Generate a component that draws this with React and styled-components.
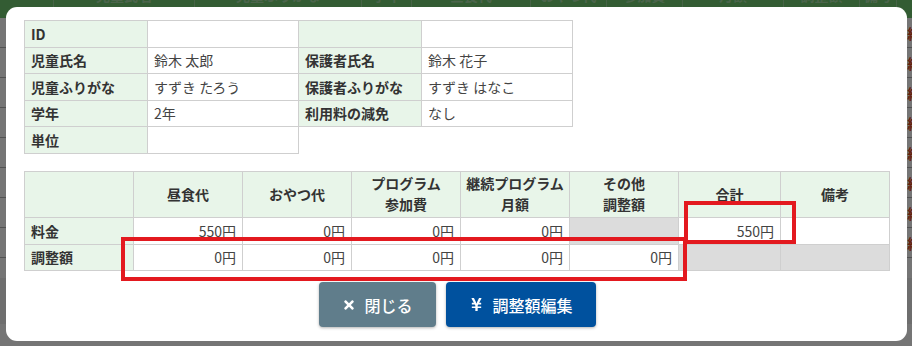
import React from "react";
import styled, { createGlobalStyle } from "styled-components";
import { FaTimes, FaYenSign } from "react-icons/fa";

const GlobalStyle = createGlobalStyle`
  html, body {
    margin: 0;
    padding: 0;
    overflow: hidden;
    font-family: "Noto Sans CJK JP", "Noto Sans", sans-serif;
  }
`;

const bgColumns = [54, 141, 167, 50, 119, 76, 76, 101, 76, 37, 40];
const bgHeaders = [
  "",
  "児童氏名",
  "児童ふりがな",
  "学年",
  "昼食代",
  "おやつ代",
  "参加費",
  "月額",
  "調整額",
  "備考",
  "",
];

const infoRows = [
  ["ID", "", "", ""],
  ["児童氏名", "鈴木 太郎", "保護者氏名", "鈴木 花子"],
  ["児童ふりがな", "すずき たろう", "保護者ふりがな", "すずき はなこ"],
  ["学年", "2年", "利用料の減免", "なし"],
  ["単位", ""],
];

const feeHeaders = [
  "",
  "昼食代",
  "おやつ代",
  ["プログラム", "参加費"],
  ["継続プログラム", "月額"],
  ["その他", "調整額"],
  "合計",
  "備考",
];

const feeRows = [
  { label: "料金", cells: ["550円", "0円", "0円", "0円", null, "550円", ""] },
  { label: "調整額", cells: ["0円", "0円", "0円", "0円", "0円", null, null] },
];

const App = () => {
  return (
    <>
      <GlobalStyle />
      <Page>
        <BgHeader>
          {bgHeaders.map((h, i) => (
            <BgHead key={i} style={{ width: bgColumns[i] }}>
              {h}
            </BgHead>
          ))}
        </BgHeader>
        {Array.from({ length: 8 }).map((_, r) => (
          <BgRow key={r}>
            {bgColumns.map((w, i) => (
              <BgCell key={i} style={{ width: w }}>
                {i === bgColumns.length - 1 ? <EditMark>#編集</EditMark> : null}
              </BgCell>
            ))}
          </BgRow>
        ))}
        <BgRow short />
      </Page>

      <Overlay>
        <Modal>
          <InfoTable>
            <colgroup>
              <col style={{ width: 123 }} />
              <col style={{ width: 151 }} />
              <col style={{ width: 123 }} />
              <col style={{ width: 151 }} />
            </colgroup>
            <tbody>
              {infoRows.map((row, r) => (
                <tr key={r}>
                  {row.map((text, c) =>
                    c % 2 === 0 ? (
                      <LabelCell key={c}>{text}</LabelCell>
                    ) : (
                      <ValueCell key={c}>{text}</ValueCell>
                    )
                  )}
                </tr>
              ))}
            </tbody>
          </InfoTable>

          <FeeWrap>
            <FeeTable>
              <colgroup>
                {[109, 109, 109, 109, 109, 109, 102, 109].map((w, i) => (
                  <col key={i} style={{ width: w }} />
                ))}
              </colgroup>
              <thead>
                <tr>
                  {feeHeaders.map((h, i) => (
                    <HeadCell key={i}>
                      {Array.isArray(h) ? (
                        <>
                          {h[0]}
                          <br />
                          {h[1]}
                        </>
                      ) : (
                        h
                      )}
                    </HeadCell>
                  ))}
                </tr>
              </thead>
              <tbody>
                {feeRows.map((row) => (
                  <tr key={row.label}>
                    <RowLabel>{row.label}</RowLabel>
                    {row.cells.map((v, i) => (
                      <AmountCell key={i} $disabled={v === null}>
                        {v}
                      </AmountCell>
                    ))}
                  </tr>
                ))}
              </tbody>
            </FeeTable>
            <Highlight $left={97} $top={66} $width={566} $height={44} />
            <Highlight $left={660} $top={30} $width={112} $height={43} />
          </FeeWrap>

          <Actions>
            <Button $color="#607d8b" $width={117}>
              <FaTimes size={14} />
              閉じる
            </Button>
            <Button $color="#00519e" $width={150}>
              <FaYenSign size={15} />
              調整額編集
            </Button>
          </Actions>
        </Modal>
      </Overlay>
    </>
  );
};

export default App;

const Page = styled.div`
  width: 912px;
  height: 346px;
  background: #efefef;
`;

const BgHeader = styled.div`
  display: flex;
  height: 40px;
  margin-top: -22px;
  background: #6fc86f;
`;

const BgHead = styled.div`
  flex: none;
  box-sizing: border-box;
  border-right: 1px solid #9ad69a;
  display: flex;
  align-items: flex-end;
  justify-content: center;
  padding-bottom: 13px;
  font-size: 14px;
  font-weight: 700;
  color: #a4dba4;
  white-space: nowrap;
  overflow: hidden;
`;

const BgRow = styled.div`
  display: flex;
  height: ${(p) => (p.short ? "20px" : "30px")};
  box-sizing: border-box;
  background: #ffffff;
  border-bottom: ${(p) => (p.short ? "none" : "1px solid #b4b4b4")};
`;

const BgCell = styled.div`
  flex: none;
  display: flex;
  align-items: center;
  overflow: hidden;
`;

const EditMark = styled.span`
  padding-left: 2px;
  font-size: 14px;
  font-weight: 700;
  color: #e04a1e;
`;

const Overlay = styled.div`
  position: fixed;
  inset: 0;
  background: rgba(0, 0, 0, 0.54);
  display: flex;
  align-items: flex-start;
  padding: 7px 0 0 6px;
`;

const Modal = styled.div`
  width: 901px;
  height: 334px;
  box-sizing: border-box;
  background: #ffffff;
  border-radius: 11px;
  padding: 13px 18px 13px 18px;
  display: flex;
  flex-direction: column;
`;

const InfoTable = styled.table`
  border-collapse: collapse;
  table-layout: fixed;
  width: 548px;
  font-size: 14px;

  td {
    height: 26.5px;
    padding: 0 6px;
    box-sizing: border-box;
    border: 1px solid #cfcfcf;
    white-space: nowrap;
  }
`;

const LabelCell = styled.td`
  background: #e8f5e9;
  font-weight: 700;
  color: #333333;
`;

const ValueCell = styled.td`
  background: #ffffff;
  color: #444444;
`;

const FeeWrap = styled.div`
  position: relative;
  margin-top: 17px;
  width: 865px;
`;

const FeeTable = styled.table`
  border-collapse: collapse;
  table-layout: fixed;
  width: 865px;
  font-size: 14px;

  td,
  th {
    box-sizing: border-box;
    border: 1px solid #cfcfcf;
    white-space: nowrap;
  }
`;

const HeadCell = styled.th`
  height: 46.5px;
  padding: 0;
  background: #e8f5e9;
  color: #333333;
  font-weight: 700;
  line-height: 21px;
  text-align: center;
`;

const RowLabel = styled.td`
  height: 26.5px;
  padding: 0 6px;
  background: #e8f5e9;
  color: #333333;
  font-weight: 700;
`;

const AmountCell = styled.td`
  height: 26.5px;
  padding: 0 6px;
  text-align: right;
  color: #444444;
  background: ${(p) => (p.$disabled ? "#dcdcdc" : "#ffffff")};
`;

const Highlight = styled.div`
  position: absolute;
  left: ${(p) => p.$left}px;
  top: ${(p) => p.$top}px;
  width: ${(p) => p.$width}px;
  height: ${(p) => p.$height}px;
  box-sizing: border-box;
  border: 4px solid #e3191f;
  pointer-events: none;
`;

const Actions = styled.div`
  display: flex;
  justify-content: center;
  gap: 10px;
  margin-top: 11px;
  padding-left: 2px;
`;

const Button = styled.button`
  width: ${(p) => p.$width}px;
  height: 45px;
  display: flex;
  align-items: center;
  justify-content: center;
  gap: 8px;
  border: none;
  border-radius: 4px;
  background: ${(p) => p.$color};
  color: #ffffff;
  font-family: "Noto Sans CJK JP", "Noto Sans", sans-serif;
  font-size: 16px;
  font-weight: 500;
  box-shadow: 0 1px 3px rgba(0, 0, 0, 0.3);
  cursor: pointer;
`;
